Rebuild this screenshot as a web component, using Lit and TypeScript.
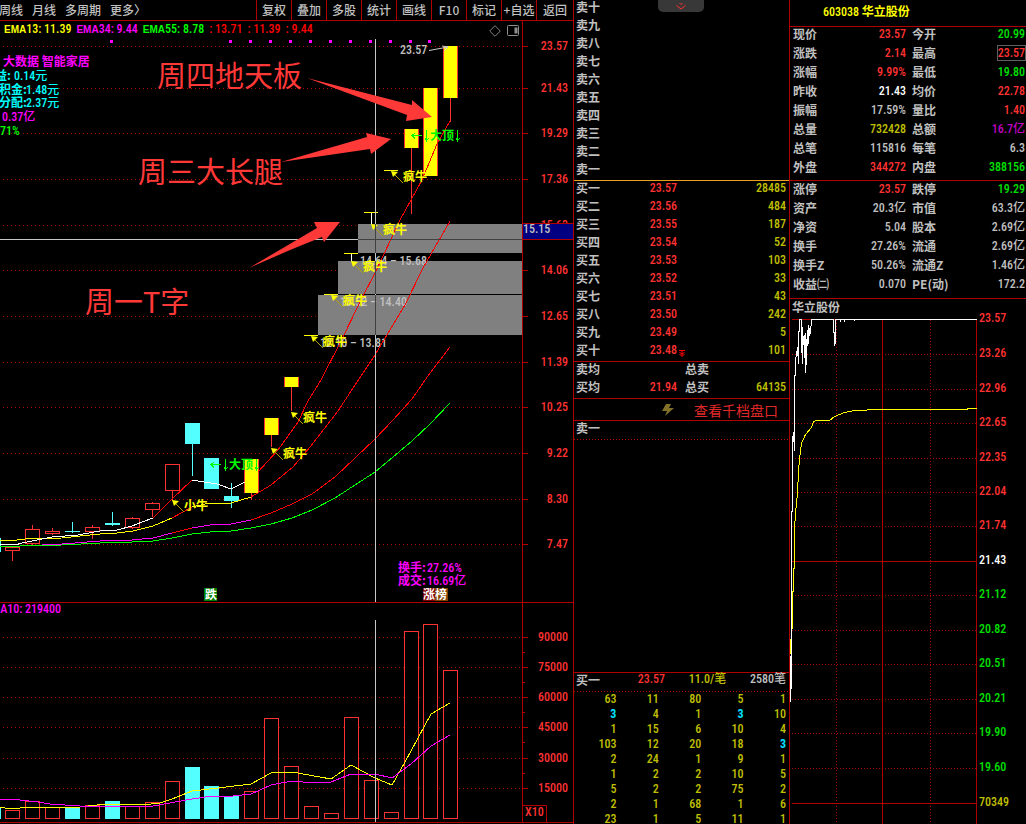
import { LitElement, html, svg, css } from "lit";
import { customElement } from "lit/decorators.js";

type Pt = [number, number];
type Kind = "up" | "down" | "limit";

const line = (pts: Pt[]) => pts.map((p) => p.join(",")).join(" ");

const tools = ["复权", "叠加", "多股", "统计", "画线", "F10", "标记", "+自选", "返回"];
const periods = ["周线", "月线", "多周期", "更多〉"];

const legend = [
  { c: "yellow", name: "EMA", n: "13:", v: "11.39" },
  { c: "magenta", name: "EMA", n: "34:", v: "9.44" },
  { c: "lime", name: "EMA", n: "55:", v: "8.78" },
  { c: "red", name: "", n: ":", v: "13.71" },
  { c: "red", name: "", n: ":", v: "11.39" },
  { c: "red", name: "", n: ":", v: "9.44" },
];

const priceTicks: [number, string][] = [
  [46, "23.57"], [88, "21.43"], [133, "19.29"], [179, "17.36"], [225, "15.63"], [270, "14.06"],
  [316, "12.65"], [362, "11.39"], [407, "10.25"], [453, "9.22"], [499, "8.30"], [544, "7.47"],
];
const volumeTicks: [number, string][] = [
  [637, "90000"], [667, "75000"], [697, "60000"], [727, "45000"], [758, "30000"], [788, "15000"],
];

// left edge, body top, body bottom, wick top, wick bottom, kind
const candles: [number, number, number, number, number, Kind][] = [
  [-14, 538, 551, 538, 551, "down"],
  [5, 547, 550, 547, 560, "up"],
  [25, 529, 543, 525, 544, "up"],
  [45, 531, 533, 528, 534, "up"],
  [65, 531, 531, 522, 532, "down"],
  [85, 527, 531, 525, 538, "up"],
  [105, 523, 524, 512, 525, "down"],
  [125, 518, 527, 517, 528, "up"],
  [145, 503, 509, 502, 516, "up"],
  [165, 464, 490, 464, 500, "up"],
  [185, 423, 443, 423, 475, "down"],
  [204, 458, 488, 458, 488, "down"],
  [224, 496, 500, 483, 507, "down"],
  [244, 459, 492, 459, 499, "limit"],
  [264, 418, 434, 418, 446, "limit"],
  [284, 377, 386, 377, 410, "limit"],
  [404, 129, 147, 129, 213, "limit"],
  [423, 88, 175, 88, 175, "limit"],
  [443, 46, 97, 46, 121, "limit"],
];

// left edge, top, kind
const volumes: [number, number, Kind][] = [
  [-14, 807, "down"], [5, 810, "up"], [25, 801, "up"], [45, 807, "up"], [65, 808, "down"],
  [85, 805, "up"], [105, 801, "down"], [125, 806, "up"], [145, 802, "up"], [165, 781, "up"],
  [185, 767, "down"], [204, 786, "down"], [224, 796, "down"], [244, 791, "up"], [264, 718, "up"],
  [284, 766, "up"], [304, 806, "up"], [324, 813, "up"], [344, 717, "up"], [364, 780, "up"],
  [384, 812, "up"], [404, 631, "up"], [423, 624, "up"], [443, 670, "up"],
];

const averages: { c: string; pts: Pt[] }[] = [
  { c: "green", pts: [[0, 546], [20, 546], [62, 545], [100, 543], [132, 542], [153, 541], [172, 538], [192, 534], [210, 532], [231, 531], [251, 528], [271, 524], [292, 518], [312, 510], [335, 498], [355, 485], [375, 472], [393, 457], [412, 441], [430, 424], [450, 403]] },
  { c: "pink", pts: [[42, 544], [62, 544], [100, 541], [132, 540], [153, 538], [172, 533]] },
  { c: "hot", pts: [[172, 533], [192, 528]] },
  { c: "pink", pts: [[192, 528], [210, 525], [231, 524], [251, 520]] },
  { c: "hot", pts: [[251, 520], [271, 513], [292, 504], [312, 494], [335, 477], [355, 458], [375, 439], [393, 420], [412, 399], [430, 373], [450, 347]] },
  { c: "gold", pts: [[0, 540], [10, 541], [25, 539], [62, 538], [80, 536], [100, 534], [117, 533], [133, 531], [153, 526], [172, 518]] },
  { c: "hot", pts: [[172, 518], [192, 507]] },
  { c: "gold", pts: [[192, 507], [205, 504], [231, 503], [251, 497]] },
  { c: "hot", pts: [[251, 497], [271, 485], [293, 467], [310, 447], [338, 411], [355, 385], [375, 355], [405, 305], [423, 268], [450, 221]] },
  { c: "white", pts: [[0, 544], [15, 545], [22, 543], [32, 541], [52, 537], [78, 535], [100, 531], [117, 530], [132, 526], [142, 522], [153, 518]] },
  { c: "hot", pts: [[153, 518], [172, 499], [192, 480]] },
  { c: "white", pts: [[192, 480], [204, 482], [217, 484], [231, 489], [245, 482]] },
  { c: "hot", pts: [[258, 472], [278, 450], [298, 422], [308, 401], [321, 380], [340, 343], [362, 298], [375, 273], [400, 220], [422, 180], [437, 144], [450, 121]] },
];

// one-price weeks: bar left edge, bar y, stem length
const gaps: [number, number, number][] = [
  [304, 335, 0], [324, 294, 0], [344, 253, 7], [364, 212, 11], [384, 170, 0],
];

// pointer tip and text
const bulls: [number, number, string][] = [
  [391, 171, "疯牛"], [371, 224, "疯牛"], [351, 261, "疯牛"], [331, 295, "疯牛"], [311, 336, "疯牛"],
  [291, 412, "疯牛"], [271, 448, "疯牛"], [172, 500, "小牛"],
];

const sells = ["十", "九", "八", "七", "六", "五", "四", "三", "二", "一"];
const buys: [string, string, string][] = [
  ["买一", "23.57", "28485"], ["买二", "23.56", "484"], ["买三", "23.55", "187"], ["买四", "23.54", "52"],
  ["买五", "23.53", "103"], ["买六", "23.52", "33"], ["买七", "23.51", "43"], ["买八", "23.50", "242"],
  ["买九", "23.49", "5"], ["买十", "23.48", "101"],
];
const lots = [
  ["63", "11", "80", "5", "1"], ["3*", "4", "1", "3*", "10"], ["1", "15", "6", "10", "4"],
  ["103", "12", "20", "18", "3*"], ["2", "24", "1", "9", "1"], ["1", "2", "2", "10", "5"],
  ["5", "2", "2", "75", "2"], ["2", "1", "68", "1", "6"], ["23", "1", "5", "11", "1"],
];

type Quote = [string, string, string, string, string, string];
const quoteA: Quote[] = [
  ["现价", "23.57", "r", "今开", "20.99", "g"],
  ["涨跌", "2.14", "r", "最高", "23.57", "r boxed"],
  ["涨幅", "9.99%", "r", "最低", "19.80", "g"],
  ["昨收", "21.43", "w", "均价", "22.78", "r"],
  ["振幅", "17.59%", "", "量比", "1.40", "r"],
  ["总量", "732428", "y", "总额", "16.7亿", "p"],
  ["总笔", "115816", "", "每笔", "6.3", ""],
  ["外盘", "344272", "r", "内盘", "388156", "g"],
];
const quoteB: Quote[] = [
  ["涨停", "23.57", "r", "跌停", "19.29", "g"],
  ["资产", "20.3亿", "", "市值", "63.3亿", ""],
  ["净资", "5.04", "", "股本", "2.69亿", ""],
  ["换手", "27.26%", "", "流通", "2.69亿", ""],
  ["换手Z", "50.26%", "", "流通Z", "1.46亿", ""],
  ["收益㈡", "0.070", "", "PE(动)", "172.2", ""],
];

const dayTicks: [number, string, string][] = [
  [319, "23.57", "tr"], [354, "23.26", "tr"], [389, "22.96", "tr"], [423, "22.65", "tr"], [458, "22.35", "tr"],
  [492, "22.04", "tr"], [526, "21.74", "tr"], [561, "21.43", "tw"], [595, "21.12", "tg"], [630, "20.82", "tg"],
  [664, "20.51", "tg"], [699, "20.21", "tg"], [733, "19.90", "tg"], [768, "19.60", "tg"], [803, "70349", "ty"],
];
const dayPrice: Pt[] = [
  [790, 701], [790, 656], [791, 688], [791, 511], [792, 511], [792, 439], [793, 432], [794, 450], [794, 375],
  [795, 375], [795, 361], [796, 352], [797, 354], [797, 347], [798, 363], [798, 331], [799, 331], [799, 319],
  [801, 319], [801, 342], [802, 363], [802, 327], [803, 344], [804, 335], [804, 357], [805, 333], [805, 372],
  [806, 357], [806, 348], [807, 330], [807, 345], [808, 325], [808, 343], [809, 328], [809, 335], [810, 327],
  [810, 333], [811, 319], [833, 319], [833, 332], [834, 332], [834, 345], [835, 341], [835, 319], [840, 319],
  [840, 321], [840, 319], [844, 319], [844, 321], [844, 319], [854, 319], [854, 320], [854, 319], [976, 319],
];
const dayAverage: Pt[] = [
  [790, 653], [790, 639], [791, 668], [791, 628], [792, 628], [792, 591], [793, 591], [793, 568], [794, 568],
  [794, 529], [795, 513], [796, 502], [797, 493], [798, 471], [799, 458], [801, 443], [805, 434], [811, 427],
  [813, 421], [816, 420], [829, 420], [834, 416], [844, 412], [854, 410], [879, 409], [967, 409], [967, 408],
  [976, 408],
];

const chartStyles = css`
  :host { display: block; }
  svg { display: block; width: 100%; height: auto; overflow: visible; shape-rendering: crispEdges; }
  text { font-family: "Roboto Condensed", "DejaVu Sans Condensed", "Noto Sans CJK SC", sans-serif; font-size: 12px; font-weight: 500; }
  .cn { font-family: "Noto Sans CJK SC", sans-serif; font-size: 12px; font-weight: 700; }
  .end { text-anchor: end; }
  .rule { stroke: #b00000; fill: none; }
  .dots { stroke: #a80000; fill: none; stroke-dasharray: 1 3; }
  .tr { fill: #ff3232; }
  .tw { fill: #ffffff; }
  .tg { fill: #00e000; }
  .ty { fill: #c0c000; }
  .tm { fill: #ff00ff; }
  .tc { fill: #00ffff; }
  .tl { fill: #00ff00; }
  .ts { fill: #c0c0c0; }
  .green, .pink, .hot, .gold, .white { fill: none; stroke-width: 1; }
  .green { stroke: #00ff00; }
  .pink { stroke: #ff00ff; }
  .hot { stroke: #ff0000; }
  .gold { stroke: #ffff00; }
  .white { stroke: #ffffff; }
  .upBody { fill: #000000; stroke: #ff3232; }
  .downBody { fill: #54ffff; }
  .limitBody { fill: #ffff00; }
  .upWick { stroke: #ff3232; }
  .downWick { stroke: #54ffff; }
  .cross { stroke: #c8c8c8; }
  .crossDim { stroke: #404040; }
`;

@customElement("price-chart")
class PriceChart extends LitElement {
  static styles = [chartStyles, css`
    .band { fill: #808080; }
    .note { font-family: "Noto Sans CJK SC", sans-serif; font-size: 29px; font-weight: 400; fill: #ff3838; }
    .pointer { fill: #ff3838; shape-rendering: geometricPrecision; }
    .smooth { shape-rendering: geometricPrecision; }
    .bull { fill: #ffff00; }
    .bullLine { stroke: #b0a000; }
    .top { stroke: #00ff00; fill: none; }
  `];

  candle([x, t, b, wt, wb, k]: [number, number, number, number, number, Kind]) {
    const mid = x + 7.5;
    const wickClass = k === "down" ? "downWick" : "upWick";
    return svg`
      <line class=${wickClass} x1=${mid} x2=${mid} y1=${wt} y2=${wb + 1}></line>
      ${k === "up"
        ? svg`<rect class="upBody" x=${x + 0.5} y=${t + 0.5} width="14" height=${b - t}></rect>`
        : svg`<rect class=${k + "Body"} x=${x} y=${t} width="15" height=${b - t + 1}></rect>`}
      ${k === "limit"
        ? svg`<path class="upWick" d="M${x + 0.5} ${t}V${b + 1}M${x + 14.5} ${t}V${b + 1}"></path>`
        : null}`;
  }

  topMark(x: number, y: number) {
    return svg`
      <path class="top" d="M${x} ${y + 0.5}h10M${x + 3} ${y - 2}l-3 2.5l3 3M${x + 14.5} ${y - 5}v11M${x + 13} ${y + 3}l1.5 3l2 -3M${x + 45.5} ${y - 5}v11M${x + 44} ${y + 3}l1.5 3l2 -3"></path>
      <text class="cn tl" x=${x + 18} y=${y + 5}>大顶</text>`;
  }

  render() {
    const dots = [111, 230, 250, 270, 290, 310, 330, 350, 370, 390, 410, 429];
    return html`<svg viewBox="0 37 573 565" role="img" aria-label="周线">
      ${priceTicks.map(([y, t]) => svg`
        <line class="dots" x1="3" x2="522" y1=${y + 0.5} y2=${y + 0.5}></line>
        <line class="rule" x1="523" x2="528" y1=${y + 0.5} y2=${y + 0.5}></line>
        <text class="tr end" x="568" y=${y + 4}>${t}</text>`)}
      <line class="rule" x1="522.5" x2="522.5" y1="37" y2="602"></line>
      ${dots.map((x) => svg`<rect class="tm" x=${x - 1} y="40" width="3" height="3"></rect>`)}

      <rect class="band" x="358" y="224" width="164" height="29"></rect>
      <rect class="band" x="338" y="261" width="184" height="33"></rect>
      <rect class="band" x="318" y="295" width="204" height="40"></rect>
      <text class="ts" x="360" y="265">14.64 – 15.68</text>
      <text class="ts" x="340" y="306">13.52 – 14.40</text>
      <text class="ts" x="320" y="347">12.10 – 13.81</text>

      ${candles.map((c) => this.candle(c))}
      ${averages.map((a) => svg`<polyline class=${a.c} points=${line(a.pts)}></polyline>`)}
      ${gaps.map(([x, y, s]) => svg`
        <line class="gold" x1=${x} x2=${x + 14} y1=${y + 0.5} y2=${y + 0.5}></line>
        ${s ? svg`<line class="white" x1=${x + 7.5} x2=${x + 7.5} y1=${y + 1} y2=${y + s + 1}></line>` : null}`)}
      ${bulls.map(([x, y, t]) => svg`
        <g class="smooth">
          <path class="bullLine" d="M${x + 3} ${y + 3}l9 9"></path>
          <path class="bull" d="M${x} ${y}l7 1l-5 5z"></path>
        </g>
        <text class="cn bull" x=${x + 12} y=${y + 10}>${t}</text>`)}
      ${this.topMark(412, 135)}
      ${this.topMark(211, 464)}

      <path class="cross" d="M375.5 39V602M0 239.5H358"></path>
      <path class="crossDim" d="M358 239.5H522M375.5 224V253M375.5 261V294M375.5 295V335"></path>
      <rect x="523" y="223" width="50" height="17" fill="#000080"></rect>
      <path class="rule" d="M523 223.5H573M523 239.5H573"></path>
      <text class="ts" x="523" y="233">15.15</text>

      <text class="ts" x="400" y="54">23.57</text>
      <path class="cross smooth" fill="none" d="M429 50.5L448 47M442 46l6 1l-4 4"></path>

      <text class="cn tm" x="3" y="66">大数据 智能家居</text>
      <text class="cn tc" x="-5" y="80">益:</text><text class="tc" x="14" y="80">0.14元</text>
      <text class="cn tc" x="-1" y="94">积金:</text><text class="tc" x="26" y="94">1.48元</text>
      <text class="cn tc" x="-1" y="107">分配:</text><text class="tc" x="26" y="107">2.37元</text>
      <text class="tm" x="2" y="121">0.37亿</text>
      <text class="tl" x="0" y="135">71%</text>

      <text class="note" x="157" y="87">周四地天板</text>
      <text class="note" x="138" y="183">周三大长腿</text>
      <text class="note" x="85" y="313">周一T字</text>
      <path class="pointer" d="M307 78L412 105L412 100L432 117L406 121L407 115Z"></path>
      <path class="pointer" d="M281 162L367 137L366 133L391 139L371 154L370 149Z"></path>
      <path class="pointer" d="M249 268L317 228L314 222L340 222L324 242L322 237L290 250Z"></path>

      <text class="cn tm" x="398" y="572">换手:</text><text class="tm" x="427" y="572">27.26%</text>
      <text class="cn tm" x="398" y="585">成交:</text><text class="tm" x="427" y="585">16.69亿</text>
      <rect x="204" y="588" width="13" height="13" fill="#008000"></rect>
      <text class="cn tw" x="205" y="599">跌</text>
      <rect x="423" y="588" width="12" height="13" fill="#800000"></rect>
      <rect x="435" y="588" width="13" height="13" fill="#804000"></rect>
      <text class="cn tw" x="423" y="599">涨榜</text>
    </svg>`;
  }
}

@customElement("volume-chart")
class VolumeChart extends LitElement {
  static styles = chartStyles;

  render() {
    const gold: Pt[] = [[0, 807], [5, 808], [20, 808], [23, 807], [80, 807], [88, 806], [107, 804], [123, 804], [143, 805], [160, 803], [172, 799], [192, 791], [218, 788], [251, 784], [271, 773], [292, 772], [331, 779], [351, 765], [375, 778], [392, 785], [405, 762], [411, 751], [431, 714], [450, 703]];
    const pink: Pt[] = [[0, 799], [20, 800], [38, 802], [50, 804], [80, 806], [100, 807], [123, 806], [153, 806], [170, 803], [192, 799], [212, 796], [233, 796], [251, 794], [271, 785], [292, 781], [303, 782], [331, 782], [351, 774], [375, 774], [392, 778], [411, 764], [431, 746], [450, 735]];
    return html`<svg viewBox="0 602 573 222" role="img" aria-label="成交量">
      <path class="rule" d="M0 602.5H573M0 822.5H573M522.5 602V822M523 805.5H546.5V822"></path>
      ${volumeTicks.map(([y, t], i) => svg`
        <line class="dots" x1="3" x2="522" y1=${y + 0.5} y2=${y + 0.5}></line>
        <line class="rule" x1="523" x2="528" y1=${y + 0.5} y2=${y + 0.5}></line>
        ${i < 5 ? svg`<line class="rule" x1="523" x2="525" y1=${y + 15.5} y2=${y + 15.5}></line>` : null}
        <text class="tr end" x="568" y=${y + 4}>${t}</text>`)}
      ${volumes.map(([x, t, k]) => k === "up"
        ? svg`<rect class="upBody" x=${x + 0.5} y=${t + 0.5} width="14" height=${818 - t}></rect>`
        : svg`<rect class="downBody" x=${x} y=${t} width="15" height=${819 - t}></rect>`)}
      <polyline class="gold" points=${line(gold)}></polyline>
      <polyline class="pink" points=${line(pink)}></polyline>
      <path class="cross" d="M375.5 620V822"></path>
      <text class="tm end" x="61" y="613">MA10: 219400</text>
      <text class="tr" x="525" y="816">X10</text>
    </svg>`;
  }
}

@customElement("day-chart")
class DayChart extends LitElement {
  static styles = [chartStyles, css`.fine { stroke: #b00000; stroke-dasharray: 1 2; fill: none; }`];

  render() {
    return html`<svg viewBox="790 318 236 506" role="img" aria-label="分时">
      ${dayTicks.map(([y, t, c]) => svg`
        <line class=${["23.57", "21.43", "70349"].includes(t) ? "rule" : "fine"} x1="792" x2="976" y1=${y + 0.5} y2=${y + 0.5}></line>
        <text class=${c} x="979" y=${y + 3}>${t}</text>`)}
      <path class="rule" d="M976.5 319V824M882.5 319V824"></path>
      <path class="fine" d="M836.5 320V824M930.5 320V824"></path>
      <g transform="translate(.5 .5)">
        <polyline class="gold" points=${line(dayAverage)}></polyline>
        <polyline class="white" points=${line(dayPrice)}></polyline>
      </g>
    </svg>`;
  }
}

@customElement("app-root")
class AppRoot extends LitElement {
  static styles = css`
    :host {
      --rule: #b00000;
      display: grid;
      grid-template-columns: minmax(0, 1fr) 216px 237px;
      height: 100vh;
      overflow: hidden;
      background: #000;
      color: #c0c0c0;
      font: 500 12px/14px "Roboto Condensed", "DejaVu Sans Condensed", "Noto Sans CJK SC", sans-serif;
    }
    button { background: none; border: 0; margin: 0; padding: 0; color: inherit; font: inherit; cursor: pointer; }
    table { border-collapse: collapse; table-layout: fixed; width: 100%; }
    th, td { padding: 0; vertical-align: top; text-align: right; white-space: nowrap; }
    th { text-align: left; font: 700 12px/14px "Noto Sans CJK SC", sans-serif; }
    .left, .middle, .right { min-width: 0; overflow: hidden; display: flex; flex-direction: column; }
    .middle, .right { border-left: 1px solid var(--rule); }
    .middle { position: relative; }

    .toolbar { display: flex; height: 20px; border-bottom: 1px solid var(--rule); font: 500 12px/18px "Noto Sans CJK SC", sans-serif; }
    .periods { flex: 1; display: flex; gap: 9px; margin-left: -1px; white-space: nowrap; overflow: hidden; }
    .tool { width: 35px; border-left: 1px solid var(--rule); box-sizing: border-box; white-space: nowrap; }
    .tool:last-child { width: 37px; }
    .legendRow { display: flex; height: 16px; }
    .legend { flex: 1; display: flex; gap: 5px; padding-left: 4px; white-space: nowrap; align-items: center; }
    .name { font: bold 10px/14px "Liberation Sans", sans-serif; }
    .icons { display: flex; gap: 6px; align-items: end; padding-right: 3px; }
    .axisHead { width: 50px; border-left: 1px solid var(--rule); }
    .yellow { color: #ffff00; } .magenta { color: #ff00ff; } .lime { color: #00ff00; } .red { color: #ff0000; }

    .book tr { height: 18px; }
    .book, .avg, .head { padding: 0 3px 0 2px; }
    .book th { width: 40px; }
    .book .price { width: 61px; }
    .book .label { width: 32px; padding-left: 8px; }
    .buy, .avg, .deep, .ask, .bid { border-top: 1px solid var(--rule); }
    .buy { border-top-color: #e8a020; }
    .price, .r { color: #ff3232; }
    .vol, .y { color: #c0c000; }
    .g { color: #00e000; } .w { color: #fff; } .p { color: #c000c0; }
    .mark { vertical-align: top; margin: 7px 0 0 2px; float: left; }
    .tab { position: absolute; top: 0; left: 84px; width: 46px; height: 12px; border-radius: 0 0 5px 5px; background: #383838; display: grid; place-items: center; }
    .deep { height: 21px; display: flex; align-items: center; gap: 20px; padding-left: 88px; color: #e02828; }
    .deep button { font: 14px/18px "Noto Sans CJK SC", sans-serif; }
    .ask { flex: 1; }
    .head {
      height: 18px; display: flex; justify-content: space-between; padding-bottom: 1px; line-height: 13px;
      background: repeating-linear-gradient(90deg, #c00000 0 1px, transparent 1px 3px) bottom / 100% 1px no-repeat;
    }
    .cn { font: 700 12px/14px "Noto Sans CJK SC", sans-serif; }
    .bid .cn.first { width: 38px; }
    .lots { height: 132px; overflow: hidden; padding-right: 3px; }
    .lots tr { height: 15px; }
    .lots td { color: #c0c000; }
    .lots .cy { color: #00e0ff; font-weight: bold; }

    .title { margin: 0; height: 26px; padding-left: 33px; font: inherit; line-height: 21px; color: #ffff00; }
    .title .cn { line-height: 21px; }
    .quote { border-top: 1px solid var(--rule); padding: 0 1px 1px 3px; }
    .quote + .quote { padding-top: 1px; padding-bottom: 2px; }
    .quote tr { height: 19px; }
    .quote .l1 { width: 46px; }
    .quote .l2 { width: 46px; padding-left: 6px; }
    .boxed span { outline: 1px solid #606060; }
    .caption { border-top: 1px solid var(--rule); margin: 0; height: 18px; padding: 1px 0 0 2px; }
  `;

  quote(rows: Quote[]) {
    return html`<div class="quote"><table>
      ${rows.map(([a, b, c, d, e, f]) => html`<tr>
        <th class="l1" scope="row">${a}</th><td class=${c}>${b}</td>
        <th class="l2" scope="row">${d}</th><td class=${f}><span>${e}</span></td></tr>`)}
    </table></div>`;
  }

  render() {
    return html`
      <main class="left">
        <nav class="toolbar">
          <div class="periods">${periods.map((p) => html`<button>${p}</button>`)}</div>
          ${tools.map((t) => html`<button class="tool">${t}</button>`)}
        </nav>
        <div class="legendRow">
          <div class="legend">
            ${legend.map((l) => html`<span class=${l.c}><span class="name">${l.name}</span>${l.n} ${l.v}</span>`)}
          </div>
          <div class="icons">
            <svg width="12" height="12" fill="none" stroke="#808080"><path d="M6 .7L11.3 6L6 11.3L.7 6Z"></path></svg>
            <svg width="12" height="12" fill="none" stroke="#909090"><rect x=".5" y=".5" width="11" height="10" rx="1"></rect><path d="M9 2.5v6" stroke-width="3"></path></svg>
          </div>
          <div class="axisHead"></div>
        </div>
        <price-chart></price-chart>
        <volume-chart></volume-chart>
      </main>

      <section class="middle">
        <button class="tab" aria-label="展开">
          <svg width="10" height="8" fill="none" stroke="#ff3232"><path d="M3.5 1L5 2.5L6.5 1M.5 3.5L5 7L9.5 3.5"></path></svg>
        </button>
        <div class="book"><table>
          ${sells.map((s) => html`<tr><th scope="row">卖${s}</th><td></td></tr>`)}
        </table></div>
        <div class="book buy"><table>
          ${buys.map(([l, p, v], i) => html`<tr><th scope="row">${l}</th><td class="price">${p}</td>
            <td class="vol">${i === 9
              ? html`<svg class="mark" width="6" height="7" fill="none" stroke="#ff0000"><path d="M0 .5H6M3 0V6M.5 2.5L3 4L5.5 2.5M.5 4L3 6.5L5.5 4"></path></svg>`
              : null}${v}</td></tr>`)}
        </table></div>
        <div class="book avg"><table>
          <tr><th scope="row">卖均</th><td class="price"></td><th class="label" scope="row">总卖</th><td></td></tr>
          <tr><th scope="row">买均</th><td class="price">21.94</td><th class="label" scope="row">总买</th><td class="vol">64135</td></tr>
        </table></div>
        <div class="deep">
          <svg width="12" height="12" fill="#807028"><path d="M4 0H9L7 4H12L3 12L5 7H0Z"></path></svg>
          <button>查看千档盘口</button>
        </div>
        <div class="ask"><div class="head"><span class="cn">卖一</span></div></div>
        <div class="bid">
          <div class="head">
            <span class="cn first">买一</span><span class="r">23.57</span>
            <span class="y">11.0/笔</span><span>2580笔</span>
          </div>
          <div class="lots"><table>
            ${lots.map((r) => html`<tr>${r.map((c) => html`<td class=${c.endsWith("*") ? "cy" : ""}>${c.replace("*", "")}</td>`)}</tr>`)}
          </table></div>
        </div>
      </section>

      <section class="right">
        <h1 class="title">603038 <span class="cn">华立股份</span></h1>
        ${this.quote(quoteA)}
        ${this.quote(quoteB)}
        <p class="caption cn">华立股份</p>
        <day-chart></day-chart>
      </section>`;
  }
}
